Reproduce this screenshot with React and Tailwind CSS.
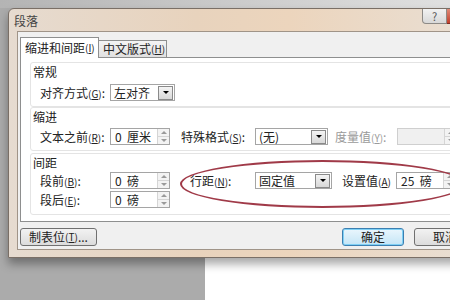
import React from 'react';

const font = { fontFamily: '"Noto Sans CJK SC", "Liberation Sans", sans-serif' };

function Hot({ k }) {
    return (
        <span className="text-[10px]">
            (<span className="underline">{k}</span>)
        </span>
    );
}

function DropBtn() {
    return (
        <div className="flex h-[14px] w-[15px] items-center justify-center border border-[#8a8a8a] bg-[linear-gradient(#f4f4f4,#d8d8d8)]">
            <div className="h-0 w-0 border-x-[3px] border-t-[3px] border-x-transparent border-t-black" />
        </div>
    );
}

function Select({ value, w }) {
    return (
        <div className={`flex h-[17px] items-center justify-between border border-[#a5a5a5] bg-white pl-[3px] pr-[1px] ${w}`}>
            <span className="text-[12px] leading-none text-[#222]">{value}</span>
            <DropBtn />
        </div>
    );
}

function Spin({ value, disabled }) {
    return (
        <div className={`flex h-[17px] w-[60px] items-center justify-between border pl-[4px] ${disabled ? 'border-[#cfcfcf] bg-[#f0f0f0]' : 'border-[#a5a5a5] bg-white'}`}>
            <span className="whitespace-pre text-[12px] leading-none text-[#222]">{value}</span>
            <div className="flex h-full w-[12px] flex-col border-l border-[#d5d5d5] bg-[#f3f3f3]">
                <div className="flex flex-1 items-center justify-center border-b border-[#d5d5d5]">
                    <div className="h-0 w-0 border-x-[3px] border-b-[3px] border-x-transparent border-b-[#9a9a9a]" />
                </div>
                <div className="flex flex-1 items-center justify-center">
                    <div className="h-0 w-0 border-x-[3px] border-t-[3px] border-x-transparent border-t-[#9a9a9a]" />
                </div>
            </div>
        </div>
    );
}

function Group({ title, children, h }) {
    return (
        <div className={`ml-[9px] rounded-[3px] border border-[#e4e4e4] pl-[2px] ${h}`}>
            <div className="pt-[1px] text-[12px] leading-[16px] text-[#222]">{title}</div>
            <div className="pl-[7px]">{children}</div>
        </div>
    );
}

export default function App() {
    return (
        <div className="relative h-[300px] w-[450px] overflow-hidden bg-[linear-gradient(to_right,#ababab_205px,#ffffff_205px)] text-[#222]" style={font}>
            <div className="h-[8px] bg-[linear-gradient(to_right,#b4b4b4,#c8c8c8_45%,#e0e0e0)]" />
            <div className="ml-[8px] h-[250px] w-[470px] rounded-t-[6px] border border-[#7a6f66] bg-[linear-gradient(to_right,#e6dbd0,#e8d3bd_40%,#ecd5bd_60%,#e9dfd4)] shadow-[0_6px_10px_rgba(0,0,0,0.35)]">
                {/* title bar */}
                <div className="flex h-[22px] items-start justify-between">
                    <span className="ml-[5px] mt-[4px] text-[12px] leading-[16px] text-[#444]">段落</span>
                    <div className="flex">
                        <div className="flex h-[15px] w-[25px] items-center justify-center rounded-bl-[4px] border border-t-0 border-[#8d8a86] bg-[linear-gradient(#f2f2f2,#d8d8d8)] text-[11px] leading-none text-[#555]">?</div>
                        <div className="h-[15px] w-[30px] border-b border-[#7d2b22] bg-[linear-gradient(#e08a78,#c2402c)]" />
                    </div>
                </div>
                {/* client */}
                <div className="ml-[8px] h-[219px] border border-[#a09488] bg-[#f0f0f0] pl-[2px]">
                    {/* tabs */}
                    <div className="mt-[5px] flex items-end">
                        <div className="relative z-10 -mb-px flex h-[21px] w-[79px] items-center border border-b-0 border-[#8e8f8f] bg-white pl-[4px] text-[12px] leading-none">
                            缩进和间距<Hot k="I" />
                        </div>
                        <div className="flex h-[17px] w-[68px] items-center border border-l-0 border-b-0 border-[#8e8f8f] bg-[linear-gradient(#f4f4f4,#e0e0e0)] pl-[4px] text-[12px] leading-none">
                            中文版式<Hot k="H" />
                        </div>
                    </div>
                    {/* panel */}
                    <div className="h-[165px] border border-[#8e8f8f] bg-white pt-[4px]">
                        <Group title="常规" h="h-[45px]">
                            <div className="mt-[4px] flex items-center text-[12px] leading-none">
                                <span className="w-[70px]">对齐方式<Hot k="G" />:</span>
                                <Select value="左对齐" w="w-[65px]" />
                            </div>
                        </Group>
                        <Group title="缩进" h="h-[44px]">
                            <div className="mt-[3px] flex items-center text-[12px] leading-none">
                                <span className="w-[70px]">文本之前<Hot k="R" />:</span>
                                <Spin value="0  厘米" />
                                <span className="ml-[11px] w-[74px]">特殊格式<Hot k="S" />:</span>
                                <Select value="(无)" w="w-[73px]" />
                                <span className="ml-[7px] w-[62px] text-[#9a9a9a]">度量值<Hot k="Y" />:</span>
                                <Spin value="" disabled />
                            </div>
                        </Group>
                        <Group title="间距" h="h-[62px] mt-[2px]">
                            <div className="mt-[1px] flex items-start text-[12px] leading-none">
                                <div className="flex flex-col gap-[2px]">
                                    <div className="flex items-center">
                                        <span className="w-[70px]">段前<Hot k="B" />:</span>
                                        <Spin value="0  磅" />
                                    </div>
                                    <div className="flex items-center">
                                        <span className="w-[70px]">段后<Hot k="E" />:</span>
                                        <Spin value="0  磅" />
                                    </div>
                                </div>
                                <div className="flex items-center">
                                    <span className="ml-[20px] w-[65px]">行距<Hot k="N" />:</span>
                                    <Select value="固定值" w="w-[77px]" />
                                    <span className="ml-[10px] w-[54px]">设置值<Hot k="A" /></span>
                                    <Spin value="25  磅" />
                                </div>
                            </div>
                        </Group>
                    </div>
                    {/* buttons */}
                    <div className="mt-[6px] flex items-center text-[12px] leading-none">
                        <div className="flex h-[18px] w-[77px] items-center justify-center rounded-[3px] border border-[#707070] bg-[linear-gradient(#f2f2f2,#dcdcdc)]">
                            制表位<Hot k="T" />...
                        </div>
                        <div className="ml-[245px] flex h-[18px] w-[62px] items-center justify-center rounded-[3px] border border-[#3c7fb1] bg-[linear-gradient(#eaf6fd,#c4e5f6)] shadow-[0_0_0_1px_#7fd0f5_inset]">
                            确定
                        </div>
                        <div className="ml-[10px] flex h-[18px] w-[62px] items-center justify-center rounded-[3px] border border-[#707070] bg-[linear-gradient(#f2f2f2,#dcdcdc)]">
                            取消
                        </div>
                    </div>
                </div>
            </div>
            {/* red hand-drawn ellipse */}
            <div className="absolute left-[180px] top-[160px] h-[48px] w-[285px] rounded-[50%] border-2 border-[#a03a48]" />
        </div>
    );
}
